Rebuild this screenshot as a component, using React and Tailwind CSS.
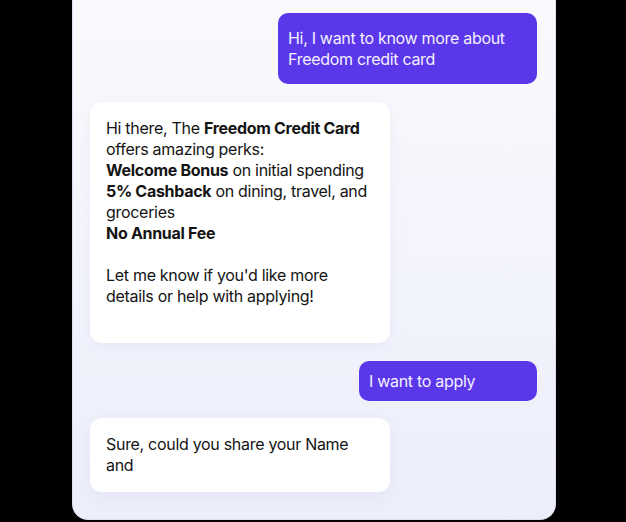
import React from "react";

const UserBubble = ({ children }) => (
    <div className="flex justify-end">
        <div className="bg-[#5b37ea] text-[#f3f0ff] rounded-[10px] px-[10px] py-[9.5px] text-[16px] leading-[21px] max-w-[260px]">
            {children}
        </div>
    </div>
);

const BotBubble = ({ children, className = "" }) => (
    <div className="flex justify-start">
        <div className={`bg-white text-[#141414] rounded-[12px] pl-4 pr-3 pt-4 w-[300px] text-[16px] leading-[21px] shadow-[0_4px_16px_rgba(90,90,160,0.06)] ${className}`}>
            {children}
        </div>
    </div>
);

export default function App() {
    return (
        <div className="bg-black w-full h-[522px] overflow-hidden" style={{ fontFamily: "Inter, 'Noto Sans', sans-serif" }}>
            <div className="ml-[72px] w-[484px] h-[520px] rounded-b-[16px] bg-gradient-to-b from-[#fafafd] to-[#eceefb] border-x border-b border-[#dcdff2] pl-[17px] pr-[18px] pt-[13px] flex flex-col tracking-[-0.3px]">
                <UserBubble>
                    <div className="w-[239px] pt-[5.5px] pb-[4.5px]">
                        Hi, I want to know more about Freedom credit card
                    </div>
                </UserBubble>

                <div className="mt-[18px]">
                    <BotBubble className="pb-9">
                        <p>
                            Hi there, The <b className="font-bold">Freedom Credit Card</b> offers amazing perks:
                        </p>
                        <p><b className="font-bold">Welcome Bonus</b> on initial spending</p>
                        <p><b className="font-bold">5% Cashback</b> on dining, travel, and groceries</p>
                        <p><b className="font-bold">No Annual Fee</b></p>
                        <p className="mt-[21px]">Let me know if you'd like more details or help with applying!</p>
                    </BotBubble>
                </div>

                <div className="mt-[18px]">
                    <UserBubble>
                        <div className="w-[158px]">I want to apply</div>
                    </UserBubble>
                </div>

                <div className="mt-[17px]">
                    <BotBubble className="pb-4 pr-10">
                        <p>Sure, could you share your Name and</p>
                    </BotBubble>
                </div>
            </div>
        </div>
    );
}
